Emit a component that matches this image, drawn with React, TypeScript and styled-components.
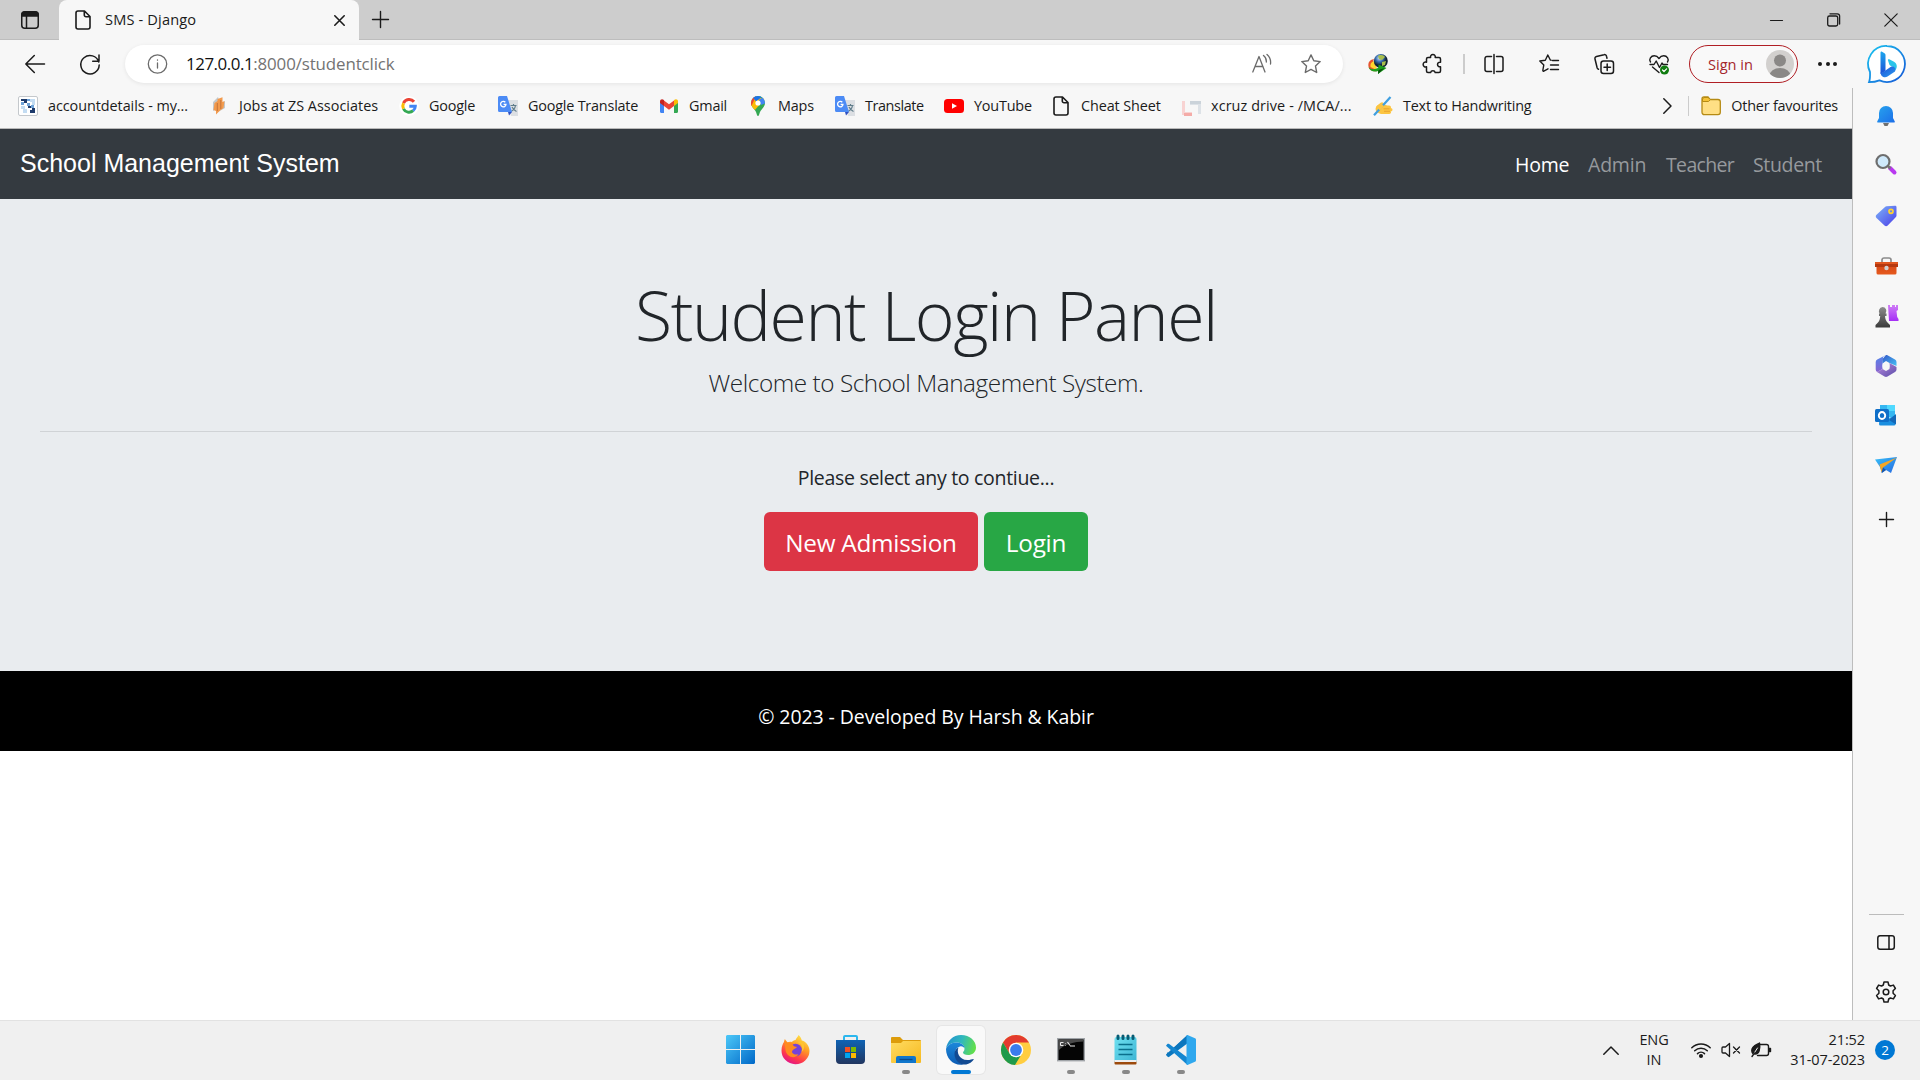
import React from "react";
import styled, { createGlobalStyle, css } from "styled-components";

const ui = `"Open Sans", "Noto Sans", sans-serif`;

const GlobalStyle = createGlobalStyle`
  * { box-sizing: border-box; }
  html, body { margin: 0; padding: 0; background: #fff; }
  body { overflow: hidden; font-family: ${ui}; }
  svg { display: block; flex: none; overflow: visible; }
`;

const Screen = styled.div`
  width: 1920px;
  height: 1080px;
  display: flex;
  flex-direction: column;
  overflow: hidden;
  background: #f7f7f7;
  color: #1b1b1b;
`;

/* ---------- tab strip ---------- */

const TabStrip = styled.header`
  height: 40px;
  flex: none;
  display: flex;
  align-items: stretch;
  background: #cdcdcd;
  box-shadow: inset 0 -1px 0 #bdbdbd;
`;

const TabActions = styled.div`
  width: 59px;
  padding: 11px 0 0 21px;
`;

const Tab = styled.div`
  width: 300px;
  display: flex;
  align-items: center;
  padding: 0 14px 0 16px;
  background: #f7f7f7;
  border-radius: 8px 8px 0 0;
`;

const TabTitle = styled.span`
  flex: 1;
  margin-left: 14px;
  padding-bottom: 2px;
  font-size: 14.6px;
  letter-spacing: 0.15px;
  line-height: 20px;
`;

const NewTab = styled.div`
  padding: 11px 0 0 13px;
  flex: 1;
`;

const WindowControls = styled.div`
  display: flex;
  align-items: center;
  gap: 44px;
  padding-right: 22px;
`;

/* ---------- toolbar ---------- */

const Toolbar = styled.div`
  height: 48px;
  flex: none;
  display: flex;
  align-items: center;
  padding: 0 14px 0 25px;
`;

const NavButtons = styled.div`
  width: 100px;
  display: flex;
  gap: 35px;
  padding-bottom: 1px;
`;

const AddressBar = styled.div`
  width: 1218px;
  height: 38px;
  display: flex;
  align-items: center;
  padding: 0 22px 1px 22px;
  border-radius: 19px;
  background: #fff;
  box-shadow: 0 1px 4px rgba(0, 0, 0, 0.08);
`;

const AddressActions = styled.div`
  display: flex;
  gap: 29px;
`;

const Url = styled.div`
  flex: 1;
  margin-left: 19px;
  padding-bottom: 1px;
  font-size: 16.9px;
  letter-spacing: -0.12px;
  color: #737373;
  b { font-weight: 400; color: #111; letter-spacing: -0.45px; }
`;

const ToolIcons = styled.div`
  display: flex;
  align-items: center;
  width: 346px;
  padding: 0 0 1px 25px;
  gap: 35px;
`;

const ToolDivider = styled.span`
  width: 2px;
  height: 20px;
  background: #ccc;
  margin: 0 -16px 0 -15px;
`;

const SignIn = styled.button`
  width: 109px;
  height: 38px;
  display: flex;
  align-items: center;
  justify-content: space-between;
  padding: 0 3px 1px 18px;
  border: 1.5px solid #b01e24;
  border-radius: 19px;
  background: #f9f9f9;
  color: #a4262c;
  font: 14.6px ${ui};
  letter-spacing: 0;
`;

const Dots = styled.div`
  width: 19px;
  margin: 0 31px 0 20px;
  display: flex;
  justify-content: space-between;
  i { width: 4px; height: 4px; border-radius: 50%; background: #1b1b1b; }
`;

/* ---------- body: page column and sidebar ---------- */

const Body = styled.div`
  height: 932px;
  flex: none;
  display: flex;
`;

const PageColumn = styled.div`
  width: 1853px;
  display: flex;
  flex-direction: column;
  border-right: 1px solid #bdbdbd;
`;

const BookmarkBar = styled.div`
  height: 41px;
  flex: none;
  display: flex;
  align-items: flex-start;
  padding: 8px 14px 0 18px;
  border-bottom: 1px solid #b9b9b9;
`;

const Bookmark = styled.div<{ $width?: number; $track?: number }>`
  width: ${(p) => (p.$width ? `${p.$width}px` : "auto")};
  display: flex;
  align-items: center;
  gap: 10px;
  height: 20px;
  font-size: 14.4px;
  line-height: 20px;
  white-space: nowrap;
  letter-spacing: ${(p) => p.$track ?? -0.2}px;
`;

const Overflow = styled.div`
  margin-left: auto;
  display: flex;
  align-items: center;
  height: 20px;
`;

const BookmarkDivider = styled.span`
  width: 1px;
  height: 20px;
  background: #ccc;
  margin: 0 12px 0 16px;
`;

/* ---------- website ---------- */

const Site = styled.main`
  flex: 1;
  background: #fff;
`;

const NavBar = styled.nav`
  height: 70px;
  display: flex;
  align-items: center;
  justify-content: space-between;
  padding: 0 29px 0 20px;
  background: #343a40;
`;

const Brand = styled.a`
  font: 25px "Liberation Sans", Arial, sans-serif;
  color: #fff;
  padding-bottom: 1px;
`;

const NavLinks = styled.div`
  display: flex;
  gap: 20px;
  padding-top: 2px;
`;

const NavLink = styled.a<{ $active?: boolean; $width: number; $track?: number }>`
  width: ${(p) => p.$width}px;
  font-size: 19.5px;
  letter-spacing: ${(p) => p.$track ?? -0.2}px;
  line-height: 30px;
  white-space: nowrap;
  color: ${(p) => (p.$active ? "#fff" : "#96999d")};
`;

const Jumbotron = styled.section`
  height: 472px;
  display: flex;
  flex-direction: column;
  align-items: center;
  padding: 74px 40px 0;
  background: #e9ecef;
  color: #212529;
`;

const Title = styled.h1`
  margin: 0;
  font-size: 68px;
  font-weight: 300;
  line-height: 84px;
  letter-spacing: -1.5px;
  white-space: nowrap;
`;

const Lead = styled.p`
  margin: 7px 0 0;
  font-size: 24.3px;
  font-weight: 300;
  line-height: 38px;
  letter-spacing: -0.44px;
`;

const Rule = styled.hr`
  width: 100%;
  height: 1px;
  margin: 29px 0 31px;
  border: 0;
  background: #d0d3d6;
`;

const Prompt = styled.p`
  margin: 0 0 19px;
  font-size: 19.5px;
  line-height: 30px;
  letter-spacing: -0.3px;
`;

const Actions = styled.div`
  display: flex;
  gap: 6px;
`;

const ActionButton = styled.button<{ $color: string; $width: number }>`
  width: ${(p) => p.$width}px;
  height: 59px;
  padding: 2px 0 0;
  border: 0;
  border-radius: 6px;
  background: ${(p) => p.$color};
  color: #fff;
  font: 24.3px ${ui};
  letter-spacing: -0.25px;
  white-space: nowrap;
`;

const Footer = styled.footer`
  height: 80px;
  padding-top: 31px;
  background: #000;
  color: #fff;
  text-align: center;
  font-size: 19.5px;
  line-height: 30px;
  letter-spacing: -0.08px;
`;

/* ---------- Edge sidebar ---------- */

const Sidebar = styled.aside`
  flex: 1;
  display: flex;
  flex-direction: column;
  align-items: center;
  padding: 18px 1px 17px 0;
`;

const SideSlot = styled.div<{ $height?: number }>`
  height: ${(p) => p.$height ?? 50}px;
  width: 24px;
  display: flex;
  justify-content: center;
`;

const SideRule = styled.div`
  width: 35px;
  height: 1px;
  margin: auto 0 20px;
  background: #bcbcbc;
`;

/* ---------- taskbar ---------- */

const Taskbar = styled.footer`
  height: 60px;
  flex: none;
  display: grid;
  grid-template-columns: 1fr 495px 1fr;
  background: #f0f0f0;
  box-shadow: inset 0 1px 0 #e2e2e2;
`;

const Apps = styled.div`
  grid-column: 2;
  display: flex;
  justify-content: space-between;
  padding-top: 6px;
`;

const indicator = css<{ $active?: boolean }>`
  &::after {
    content: "";
    width: ${(p) => (p.$active ? 20 : 8)}px;
    height: 4px;
    border-radius: 2px;
    margin-top: auto;
    background: ${(p) => (p.$active ? "#0078d4" : "#888")};
  }
`;

const AppTile = styled.div<{ $active?: boolean; $open?: boolean }>`
  width: 48px;
  height: 48px;
  margin: 0 3px 0 4px;
  display: flex;
  flex-direction: column;
  align-items: center;
  padding-top: 9px;
  border-radius: 5px;
  background: ${(p) => (p.$active ? "#f9f9f9" : "transparent")};
  box-shadow: ${(p) => (p.$active ? "0 0 0 1px #e6e6e6" : "none")};
  ${(p) => p.$open && indicator}
`;

const Tray = styled.div`
  grid-column: 3;
  display: flex;
  align-items: center;
  justify-content: flex-end;
  padding-right: 25px;
`;

const TrayText = styled.div<{ $align: "center" | "right"; $width: number }>`
  width: ${(p) => p.$width}px;
  text-align: ${(p) => p.$align};
  font-size: 14.5px;
  line-height: 20px;
  letter-spacing: -0.1px;
  white-space: nowrap;
`;

const TrayIcons = styled.div`
  display: flex;
  align-items: center;
  gap: 10px;
  margin: 0 18px 0 2px;
`;

const Badge = styled.span`
  width: 20px;
  height: 20px;
  margin-left: 10px;
  border-radius: 50%;
  background: #0078d4;
  color: #fff;
  text-align: center;
  font-size: 13.5px;
  line-height: 20px;
`;

/* ---------- drawings ---------- */

type IconProps = { w?: number; h?: number; box?: string; stroke?: string; sw?: number; children: React.ReactNode };

const Line = ({ w = 20, h = 20, box, stroke = "#1b1b1b", sw = 1.4, children }: IconProps) => (
  <svg width={w} height={h} viewBox={box ?? `0 0 ${w} ${h}`} fill="none" stroke={stroke} strokeWidth={sw} strokeLinecap="round" strokeLinejoin="round">
    {children}
  </svg>
);

const Art = ({ w = 20, h = 20, box, children }: IconProps) => (
  <svg width={w} height={h} viewBox={box ?? `0 0 ${w} ${h}`}>{children}</svg>
);

const Grad = ({ id, from, to, v }: { id: string; from: string; to: string; v?: boolean }) => (
  <linearGradient id={id} x1="0" y1="0" x2={v ? "0" : "1"} y2="1">
    <stop offset="0" stopColor={from} />
    <stop offset="1" stopColor={to} />
  </linearGradient>
);

const PageIcon = ({ w = 16 }: { w?: number }) => (
  <Line w={w} h={20} box="0 0 16 20" sw={1.6}>
    <path d="M3 1h6.5L15 6.500V17a2 2 0 0 1-2 2H3a2 2 0 0 1-2-2V3a2 2 0 0 1 2-2zM9.300 1v4a1.700 1.700 0 0 0 1.700 1.700h4" />
  </Line>
);

const AccountIcon = () => (
  <Art>
    <rect x="0.500" y="0.500" width="19" height="19" rx="1.500" fill="#fff" stroke="#c4c8cc" />
    <path d="M3 3h3v2H3zM6 3h3v4H6zM14 12h3v5h-3zM12 14h2v3h-2zM10 10h3v2h-3z" fill="#1d3a6b" />
    <path d="M9 3h3v2H9zM3 6h3v3H3zM9 7h3v3H9zM13 9h3v3h-3z" fill="#6fa3d8" />
    <path d="M12 3h5v3h-5zM3 10h4v3H3zM5 13h4v4H5zM14 6h3v3h-3z" fill="#c3dcf2" />
  </Art>
);

const ZsIcon = () => (
  <Art>
    <path d="M4 6l5-5 1 3v8l-6 3zM9 16l7-4V5l-6 4z" fill="#c2c8cd" />
    <path d="M8.500 3l5-1.800V6l2-1-1 7-3.500 2.500-4 4V15l-2.500-1 1-7L8.500 5z" fill="#f29a4d" />
    <path d="M8.300 7v8M11.800 4v9" stroke="#c4733a" strokeWidth="1" />
  </Art>
);

const GoogleIcon = () => (
  <Art>
    <circle cx="10" cy="10" r="9.800" fill="#fff" />
    <g fill="none" strokeWidth="3">
      <path d="M15 5.800A6.200 6.200 0 0 0 4.500 7.200" stroke="#ea4335" />
      <path d="M4.500 7.200a6.200 6.200 0 0 0 0 5.600" stroke="#fbbc05" />
      <path d="M4.500 12.800a6.200 6.200 0 0 0 9.600 1.900" stroke="#34a853" />
      <path d="M10.300 10.200h6a6 6 0 0 1-2.200 4.500" stroke="#4285f4" />
    </g>
  </Art>
);

const TranslateIcon = () => (
  <Art>
    <path d="M8 4h12v16h-7z" fill="#dcdfe3" />
    <path d="M12.500 9.500h6M15.500 8v1.500M17.500 9.500c-.5 3-2.500 5-4.500 6M14 11c1 2 2.500 3.500 4.500 4.500" stroke="#607d8b" strokeWidth="1.200" fill="none" />
    <path d="M1.500 0H9l5 16H1.500A1.500 1.500 0 0 1 0 14.500v-13A1.500 1.500 0 0 1 1.500 0z" fill="#4c8bf5" />
    <path d="M10 16h4l-3 3.500z" fill="#2f50c0" />
    <path d="M7.300 6.300A2.700 2.700 0 1 0 8 8.300H5.600" fill="none" stroke="#fff" strokeWidth="1.300" />
  </Art>
);

const GmailIcon = () => (
  <Art>
    <path d="M1 5.500v10.300c0 .6.500 1.200 1.200 1.200H5V9z" fill="#4285f4" />
    <path d="M19 5.500v10.300c0 .6-.5 1.200-1.200 1.200H15V9z" fill="#34a853" />
    <path d="M5 4.500V10l5 3.800 5-3.800V4.500L10 8.300z" fill="#ea4335" />
    <path d="M1 5.300C1 3.300 3.200 2.500 4.500 3.700L5 4.200V10L1 7z" fill="#c5221f" />
    <path d="M19 5.300c0-2-2.200-2.800-3.500-1.600l-.5.5V10l4-3z" fill="#fbbc04" />
  </Art>
);

const MapsIcon = () => (
  <Art>
    <clipPath id="pin"><path d="M10 0a7 7 0 0 1 7 7c0 4-3.500 5.500-5 9-.8 2-1 4-2 4s-1.200-2-2-4c-1.500-3.500-5-5-5-9a7 7 0 0 1 7-7z" /></clipPath>
    <g clipPath="url(#pin)">
      <path d="M0 0h20v20H0z" fill="#34a853" />
      <path d="M17 3L5 16 0 9l8-8z" fill="#fbbc04" />
      <path d="M0 0h8l-5 11L0 9z" fill="#ea4335" />
      <path d="M5 1.500l3 4L15 0H5z" fill="#1a73e8" />
      <path d="M11 4l4-3 3 6-5 2z" fill="#4285f4" />
    </g>
    <circle cx="10" cy="7" r="2.600" fill="#fff" />
  </Art>
);

const YouTubeIcon = () => (
  <Art><rect y="3" width="20" height="14" rx="3.500" fill="#f00" /><path d="M8 7.200v5.600l5-2.800z" fill="#fff" /></Art>
);

const XcruzIcon = () => (
  <Art>
    <path d="M1 5v14h10v-3H4V5z" fill="#f8d3d2" /><path d="M3 17h8v3H3z" fill="#f4aba7" />
    <path d="M9 5h11v13h-3V9H9z" fill="#dde2e7" /><path d="M9 5h11v3H9z" fill="#cbd3da" />
  </Art>
);

const HandwritingIcon = () => (
  <Art>
    <g fill="#fcc542">
      <ellipse cx="9" cy="13" rx="6.500" ry="5" />
      <rect x="7" y="9.500" width="11" height="3.600" rx="1.800" />
      <rect x="8" y="12" width="11.500" height="3.600" rx="1.800" />
      <rect x="7" y="14.500" width="11" height="3.500" rx="1.700" />
      <rect x="2.500" y="8" width="9" height="4" rx="2" transform="rotate(-40 7 10)" />
    </g>
    <path d="M10.500 12.800h6M11 15.300h6" stroke="#e59a2a" strokeWidth=".8" />
    <path d="M17.500 1L3.500 16.500 1 19.300" stroke="#3f9fe0" strokeWidth="2.200" fill="none" />
    <path d="M6 13.500l4-4.300" stroke="#fcc542" strokeWidth="3" />
  </Art>
);

const IdmIcon = () => (
  <Art>
    <defs><radialGradient id="globe" cx=".4" cy=".3"><stop offset="0" stopColor="#d5e6f7" /><stop offset=".5" stopColor="#3d74b8" /><stop offset="1" stopColor="#123" /></radialGradient></defs>
    <path d="M6 5C1 6 0 9 .5 12.500 1 16 5 18 9 17l-1-4C5 13 4 9 6 5z" fill="#e8542f" />
    <path d="M6 7C3 8 2 10 2.500 13l6 3V13z" fill="#ffd52e" />
    <circle cx="12.800" cy="7" r="7" fill="url(#globe)" />
    <path d="M10 2c2-2 6-1 7 1l-3 3-3-1zM14 8l4-1-1 4-3 1z" fill="#a9bf4c" />
    <path d="M.5 13c3 3 7 2.500 10 .5V10.500l8 3.500-8.500 6v-3C6 18.500 2 17 .5 13z" fill="#1ea01e" />
    <path d="M10.500 16l6-2-6.500 6z" fill="#07520b" />
  </Art>
);

const PuzzleIcon = () => (
  <Line w={20} h={20} sw={1.500}>
    <path d="M5 3.500h2.600a2.400 2.400 0 1 1 4.600 0h3.800a1.500 1.500 0 0 1 1.500 1.500v3.300a2.300 2.300 0 1 0 0 4.400V17a1.500 1.500 0 0 1-1.500 1.500h-3.800a2.400 2.400 0 0 0-4.600 0H5A1.500 1.500 0 0 1 3.500 17v-4.300a2.400 2.400 0 1 1 0-4.400V5A1.500 1.500 0 0 1 5 3.500z" />
  </Line>
);

const SplitIcon = () => (
  <Line sw={1.500}><path d="M7.500 2.500H3A2 2 0 0 0 1 4.500v11a2 2 0 0 0 2 2h4.500M12.500 2.500H17a2 2 0 0 1 2 2v11a2 2 0 0 1-2 2h-4.500M10 .5v19" /></Line>
);

const FavouritesIcon = () => (
  <Line sw={1.400}>
    <path d="M12 6.200L11.300 6 8.800 1 6.300 6.200.8 7l4 3.900-1 5.600.5.800 4.700-2.500M13.500 6.500h6M11.500 11h8M11.500 15.500h8" />
  </Line>
);

const CollectionsIcon = () => (
  <Line sw={1.500}>
    <rect x="7" y="7" width="12.500" height="12.500" rx="2.500" />
    <path d="M13.200 10v6.500M10 13.200h6.500M4.500 15.300a2 2 0 0 1-1.300-1.300L1 5a2 2 0 0 1 1.500-2.500L10 .7a2 2 0 0 1 2.500 1.500l.5 2" />
  </Line>
);

const HeartIcon = () => (
  <Line sw={1.400}>
    <path d="M1.500 8C-.5 5 2 1.800 5.300 1.800c2 0 3.500 1 4.700 2.700 1.200-1.700 2.700-2.700 4.700-2.700C18 1.800 20.500 5 18.500 8M3.500 13l6.500 5.500M1 10.500h4l2.200-3.500 3.300 6.500 2.500-4.500 1 1.500h4.500" />
    <circle cx="15.500" cy="16" r="4.500" fill="#107c10" stroke="none" />
    <path d="M13.500 16l1.500 1.500 2.600-2.700" stroke="#fff" strokeWidth="1.200" />
  </Line>
);

const BingIcon = () => (
  <Art w={38} h={38}>
    <defs><Grad id="bingRing" from="#19c5f0" to="#1656d6" /><Grad id="bingB" from="#1ca7ee" to="#1c4fd6" v /><Grad id="bingFoot" from="#1c4fd6" to="#2b9df0" /></defs>
    <path d="M19 1a18 18 0 1 1-7.500 34.400C8.500 36.600 4.500 37.200 1 37.200 2.200 34 2.200 31 2 27A18 18 0 0 1 19 1z" fill="#fff" stroke="url(#bingRing)" strokeWidth="1.800" />
    <path d="M12.500 7.500c0-1 .8-1.200 1.500-.8l2.500 1.500c.6.400 1 1 1 1.700V26l-5 3z" fill="url(#bingB)" />
    <path d="M20 15.500c-.4-1 .3-1.600 1.300-1.200l4.700 2.400c3 1.600 3.500 5 2 7.500l-1 1.300c0-2-1.500-3.500-4-4.500-1.500-.7-1.800-1.500-2-2.500z" fill="#2bc4ea" />
    <path d="M12.500 27c0 1 2 .5 3.500-.5l6.500-4.500c3.500-1.500 6 1.500 4.500 4.500l-7.500 5c-3 2-7 0-7-4.500z" fill="url(#bingFoot)" />
  </Art>
);

const BellIcon = () => (
  <Art w={18} h={20}>
    <defs><Grad id="bell" from="#27a4ee" to="#1c6ee8" /></defs>
    <path d="M6 17h6l-1.500 3h-3z" fill="#707070" />
    <path d="M9 0a7 7 0 0 1 7 7v5l1.800 3.500c.2.700-.2 1-.8 1H1c-.6 0-1-.3-.8-1L2 12V7a7 7 0 0 1 7-7z" fill="url(#bell)" />
  </Art>
);

const SearchIcon = () => (
  <Art>
    <path d="M14 14l4.500 4.500" stroke="#b939f0" strokeWidth="4" strokeLinecap="round" />
    <path d="M12 12l2.500 2.500" stroke="#777" strokeWidth="2.500" />
    <circle cx="7" cy="7.500" r="6.500" fill="#cfe9fb" stroke="#6e6e6e" strokeWidth="2.200" />
  </Art>
);

const TagIcon = () => (
  <Art w={22} h={22}>
    <defs><Grad id="tag" from="#7db4f8" to="#4a3de8" /></defs>
    <path d="M11.500 1.200L20 .8c1 0 1.500.5 1.500 1.500v8.200c0 .8-.3 1.300-.8 1.800l-8 8.200c-1 1-2.200 1-3.200 0l-8-7.500c-1-1-1-2.200 0-3.200l8.500-7.800c.4-.5.900-.8 1.500-.8z" fill="url(#tag)" />
    <circle cx="16" cy="6.300" r="2" fill="#6d86e8" stroke="#ffd22e" strokeWidth="1.700" />
  </Art>
);

const ToolboxIcon = () => (
  <Art w={23} h={18}>
    <defs><Grad id="toolbox" from="#d94a17" to="#e65a1e" v /></defs>
    <path d="M7 5V3a2 2 0 0 1 2-2h5a2 2 0 0 1 2 2v2" fill="none" stroke="#8c8c8c" strokeWidth="1.700" />
    <path d="M1.500 9h20v7a1.500 1.500 0 0 1-1.500 1.500H3A1.500 1.500 0 0 1 1.500 16z" fill="url(#toolbox)" />
    <path d="M1 5h21a1 1 0 0 1 1 1v4H0V6a1 1 0 0 1 1-1z" fill="#b5380f" />
    <path d="M0 5h23v2H0z" fill="#e0561e" />
    <circle cx="11.500" cy="11" r="2.200" fill="#d0d0d0" />
  </Art>
);

const ChessIcon = () => (
  <Art w={23} h={24}>
    <defs><Grad id="pawn" from="#8d8d8d" to="#3a3a3a" v /><Grad id="rook" from="#cf7df6" to="#a52ef5" v /></defs>
    <path d="M13 1h2v2h2V1h3v2h1V1h2v5l-1.500 1 .7 6 1.300 2v2h-9.500z" fill="url(#rook)" />
    <path d="M7.500 3a4 4 0 0 1 3 6.500h1V12H10c.2 3 1 5 2.500 6.500L15 21v2.500H.5V21L3 18.500C4.500 17 5 15 5.200 12H4V9.500h.8A4 4 0 0 1 7.500 3z" fill="url(#pawn)" />
  </Art>
);

const M365Icon = () => (
  <Art w={22} h={22}>
    <defs><Grad id="ma" from="#3558c8" to="#45c0f5" /><Grad id="mb" from="#4f86ec" to="#8a63d0" v /><Grad id="mc" from="#b98ae0" to="#5b4da8" /></defs>
    <path d="M11 0L2.200 4.600A3 3 0 0 0 .7 7v7.500a3 3 0 0 0 1.500 2.500l5.300-3V8.500L8 2z" fill="url(#mb)" />
    <path d="M7.500 8.500V4L11 0h1l8 4.500A3 3 0 0 1 21.500 7v4L14.500 8l-3.500-2z" fill="url(#ma)" />
    <path d="M14.500 8l7 4v2.500a3 3 0 0 1-1.500 2.500l-7.500 4.500a3 3 0 0 1-3 0L2 17l5.500-3 3.500 2 3.500-2z" fill="url(#mc)" />
    <circle cx="11" cy="11" r="3.600" fill="#f7f7f7" />
  </Art>
);

const OutlookIcon = () => (
  <Art w={22} h={21}>
    <path d="M5 0h13.500A1.500 1.500 0 0 1 20 1.500v11H5z" fill="#35b7f1" />
    <path d="M12 0h8v6h-8z" fill="#50d9ff" />
    <path d="M5 10l8 4 7.500-4V19a1.500 1.500 0 0 1-1.500 1.500H5.500A1.500 1.500 0 0 1 4 19z" fill="#1a8fe0" />
    <path d="M14 15l7-6v10.500z" fill="#1468b8" />
    <rect y="4" width="14" height="13" rx="1.500" fill="#0f6fc8" />
    <ellipse cx="7" cy="10.500" rx="3.200" ry="3.500" fill="none" stroke="#fff" strokeWidth="1.900" />
  </Art>
);

const PlaneIcon = () => (
  <Art w={23} h={17}>
    <defs><Grad id="plane" from="#38c0f8" to="#2668e0" /></defs>
    <path d="M0 2.500L22 0l-6 16-5-3-4 3-2-6z" fill="url(#plane)" />
    <path d="M4.500 7.500L22 .5 8 10.500l-1.500 5z" fill="#f5a623" />
    <path d="M8 10.500l3 2.500-4.500 3z" fill="#1c55a8" />
  </Art>
);

const GearIcon = () => (
  <Line w={22} h={22} sw={1.500}>
    <path d="M9 1h4l.7 3 1.700 1 3-.9 2 3.400-2.300 2.200v2.600l2.300 2.200-2 3.400-3-.9-1.700 1L13 21H9l-.7-3-1.700-1-3 .9-2-3.400 2.300-2.200V9.700L1.600 7.500l2-3.400 3 .9 1.700-1z" />
    <circle cx="11" cy="11" r="2.800" />
  </Line>
);

const StartIcon = () => (
  <Art w={29} h={29}>
    <defs><linearGradient id="win" gradientUnits="userSpaceOnUse" x1="0" y1="0" x2="29" y2="29"><stop offset="0" stopColor="#4cc8f8" /><stop offset="1" stopColor="#0068c8" /></linearGradient></defs>
    <path d="M1 0h13v14H0V1zM15 0h13l1 1v13H15zM0 15h14v14H1l-1-1zM15 15h14v13l-1 1H15z" fill="url(#win)" />
  </Art>
);

const FirefoxIcon = () => (
  <Art w={29} h={29}>
    <defs><linearGradient id="ff" x1=".8" y1="0" x2=".3" y2="1"><stop offset="0" stopColor="#fff04f" /><stop offset=".4" stopColor="#ff9a24" /><stop offset=".75" stopColor="#ff3a4a" /><stop offset="1" stopColor="#e0128c" /></linearGradient></defs>
    <path d="M17.500 0c2 1.500 3 4 3.300 5.500C24 6 28.500 10 28.500 16A14 13.500 0 0 1 .5 15.500C.5 11 2 8.500 3 7l.8-3 2.500 3.200C8 6.500 10 6.500 11 7c.5-1 2-2 3.500-2C15.500 3 17 1.500 17.500 0z" fill="url(#ff)" />
    <circle cx="14.500" cy="15" r="6.300" fill="#7542d8" />
    <path d="M3.500 5.500l4 3 4-.5c0 3.500 3 3.500 4.500 4-1 2-3.500 1.500-4.500 3.500-2 3 3 5 6 3.500-3 5.500-12 3.500-13-4z" fill="#ff8a1f" />
    <path d="M17 8c4 0 5 5 3.500 9 4-3 3.500-9-1-11.500z" fill="#ffc430" />
  </Art>
);

const StoreIcon = () => (
  <Art w={29} h={29}>
    <defs><Grad id="store" from="#0f63b4" to="#22365f" v /></defs>
    <path d="M8 6V2a1 1 0 0 1 1-1h11a1 1 0 0 1 1 1v4" fill="none" stroke="#2bb7ee" strokeWidth="2" />
    <path d="M0 5h29v20a4 4 0 0 1-4 4H4a4 4 0 0 1-4-4z" fill="url(#store)" />
    <path d="M9 12h5v5H9z" fill="#f25022" /><path d="M15 12h5v5h-5z" fill="#7fba00" />
    <path d="M9 18h5v5H9z" fill="#00a4ef" /><path d="M15 18h5v5h-5z" fill="#ffb900" />
  </Art>
);

const ExplorerIcon = () => (
  <Art w={30} h={29}>
    <defs><Grad id="exp" from="#ffdc62" to="#f6b91f" /></defs>
    <path d="M0 3a1 1 0 0 1 1-1h8l3 3h17a1 1 0 0 1 1 1v4H0z" fill="#dd9c0b" />
    <path d="M0 8h10l2-2h18v21a1 1 0 0 1-1 1H1a1 1 0 0 1-1-1z" fill="url(#exp)" />
    <path d="M5 28v-5a2 2 0 0 1 2-2h16a2 2 0 0 1 2 2v5z" fill="#1076cc" />
    <path d="M8.500 24.500h13" stroke="#0a4a8c" strokeWidth="1.300" />
  </Art>
);

const EdgeIcon = () => (
  <Art w={30} h={30}>
    <defs>
      <linearGradient id="e1" x1="0" y1=".3" x2="1" y2=".5"><stop offset="0" stopColor="#2292cf" /><stop offset=".5" stopColor="#30b8bd" /><stop offset="1" stopColor="#63e048" /></linearGradient>
      <Grad id="e2" from="#1c88da" to="#0d5cb4" v />
    </defs>
    <path d="M0 14C1 6 7 0 15 0c9 0 15 6 15 12.500 0 5-4 7.500-8 7.500-3 0-5-1-5-2.500 0-1 1.500-1.500 1.500-3.800C18.500 10 15 7.500 10.500 7.500 5 7.500 1 10.500 0 14z" fill="url(#e1)" />
    <path d="M0 14c1-3.500 5-6.500 10.500-6.500 4.500 0 8 2.500 8 6-1-2-3-2.500-4.500-2-4 1-5 4.500-5 7 0 5 4 9.500 8 11C8 31 0 24 0 14z" fill="url(#e2)" />
    <path d="M12.500 12.500c-2 4 0 12.500 9 12.500 3 0 5.500-1.500 6-1s0 1-1 2c-3 3-7 4-10 3.500C11 28 8.500 23 8.500 19c0-3 1.500-5.500 4-6.500z" fill="#124a92" />
  </Art>
);

const ChromeIcon = () => (
  <Art w={30} h={30}>
    <circle cx="15" cy="15" r="15" fill="#ffcd40" />
    <path d="M2 7.500A15 15 0 0 1 28 7.500H15L8.500 18.500z" fill="#e33b2e" />
    <path d="M2 7.500A15 15 0 0 0 14 30l7-11.500-12.500 0z" fill="#1f9a4b" />
    <circle cx="15" cy="15" r="7.300" fill="#fff" /><circle cx="15" cy="15" r="5.900" fill="#3a7cec" />
  </Art>
);

const PromptIcon = () => (
  <Art w={28} h={29}>
    <rect x=".7" y="3.700" width="26.600" height="22" fill="#050505" stroke="#a0a4a8" strokeWidth="1.400" />
    <path d="M1.500 4.500h25v2c-8 0-20 3-25 9z" fill="#4a4a4a" />
    <path d="M3.500 7.500h3M3.500 10.500h3M3.500 7.500v3M8.500 8v.5M8.500 10v.5M10.500 7l2.500 3.500M13 11h5" stroke="#e8e8e8" strokeWidth="1.100" />
  </Art>
);

const NotepadIcon = () => (
  <Art w={23} h={30}>
    <defs><Grad id="note" from="#6fe0f0" to="#3db5d4" /></defs>
    <path d="M.5 26h22v2.500a1 1 0 0 1-1 1h-20a1 1 0 0 1-1-1z" fill="#9c4a0c" />
    <path d="M.5 4a2 2 0 0 1 2-2h18a2 2 0 0 1 2 2v22.500H.5z" fill="url(#note)" />
    <path d="M.5 25h22v2H.5z" fill="#eee" />
    <path d="M4.500 9.500h14M4.500 14.500h14M4.500 19.500h14" stroke="#0a6f8c" strokeWidth="1.700" />
    <path d="M4 1v2.500M9 1v2.500M14 1v2.500M19 1v2.500" stroke="#075c74" strokeWidth="3" strokeLinecap="round" />
  </Art>
);

const CodeIcon = () => (
  <Art w={30} h={30}>
    <path d="M21.500 0L3.200 17.300a1.300 1.300 0 0 1-1.800 0L.4 20.500l2.200 1.700L22 8z" fill="#0b7fcb" />
    <path d="M21.500 0L0 19.500l1.300 1.700c.6.500 1.200.5 1.900 0L22 7z" fill="#0c76bd" />
    <path d="M21.500 30L0 10.800l1.300-1.700c.6-.5 1.200-.5 1.900 0L22 23z" fill="#1486d0" />
    <path d="M21.500 0L29 3.200a1.500 1.500 0 0 1 1 1.500v20.600a1.500 1.500 0 0 1-1 1.500L21.500 30c-.6 0-1-.5-1-1V1c0-.5.400-1 1-1z" fill="#2fa8ee" />
  </Art>
);

const WifiIcon = () => (
  <Line w={20} h={16} sw={1.500}>
    <path d="M.8 5.800a13 13 0 0 1 18.400 0M3.700 8.800a9 9 0 0 1 12.600 0M6.500 11.600a5 5 0 0 1 7 0" />
    <circle cx="10" cy="14" r="1.300" fill="#1b1b1b" />
  </Line>
);

const MutedIcon = () => (
  <Line w={20} h={16} sw={1.300}>
    <path d="M8.500 1.500v13L4.500 11H2A1 1 0 0 1 1 10V6a1 1 0 0 1 1-1h2.500zM12.500 5l6 6M18.500 5l-6 6" />
  </Line>
);

const BatteryIcon = () => (
  <Line w={20} h={16} sw={1.400}>
    <path d="M9 2.500h6.500a2 2 0 0 1 2 2v7a2 2 0 0 1-2 2H6.500M18.500 6.500h1v3h-1z" />
    <path d="M8.500 1C5 3 .8 4 .8 8.500c0 2.500 2 3.500 3.500 3.500C8 12 9.500 7 8.500 1z" fill="#1b1b1b" />
    <path d="M6.500 6L1 14.500" stroke="#f0f0f0" strokeWidth="1" /><path d="M3.500 11L1 14.500" />
  </Line>
);

/* ---------- data ---------- */

const bookmarks = [
  { text: "accountdetails - my...", width: 191, track: -0.06, icon: <AccountIcon /> },
  { text: "Jobs at ZS Associates", width: 190, track: 0.02, icon: <ZsIcon /> },
  { text: "Google", width: 99, icon: <GoogleIcon /> },
  { text: "Google Translate", width: 161, icon: <TranslateIcon /> },
  { text: "Gmail", width: 89, icon: <GmailIcon /> },
  { text: "Maps", width: 87, icon: <MapsIcon /> },
  { text: "Translate", width: 109, track: -0.4, icon: <TranslateIcon /> },
  { text: "YouTube", width: 107, icon: <YouTubeIcon /> },
  { text: "Cheat Sheet", width: 130, track: -0.1, icon: <PageIcon w={20} /> },
  { text: "xcruz drive - /MCA/...", width: 192, track: 0.1, icon: <XcruzIcon /> },
  { text: "Text to Handwriting", width: 170, icon: <HandwritingIcon /> },
];

const sideApps = [
  { icon: <BellIcon />, height: 48 },
  { icon: <SearchIcon />, height: 51 },
  { icon: <TagIcon />, height: 52 },
  { icon: <ToolboxIcon />, height: 47 },
  { icon: <ChessIcon />, height: 51 },
  { icon: <M365Icon />, height: 50 },
  { icon: <OutlookIcon />, height: 52 },
  { icon: <PlaneIcon />, height: 55 },
];

const apps = [
  { icon: <StartIcon /> },
  { icon: <FirefoxIcon /> },
  { icon: <StoreIcon /> },
  { icon: <ExplorerIcon />, open: true },
  { icon: <EdgeIcon />, open: true, active: true },
  { icon: <ChromeIcon /> },
  { icon: <PromptIcon />, open: true },
  { icon: <NotepadIcon />, open: true },
  { icon: <CodeIcon />, open: true },
];

const links = [
  { text: "Home", width: 53, active: true },
  { text: "Admin", width: 58 },
  { text: "Teacher", width: 67, track: -0.65 },
  { text: "Student", width: 70, track: -0.35 },
];

export default function App() {
  return (
    <Screen>
      <GlobalStyle />
      <TabStrip>
        <TabActions>
          <Line w={18} h={18} sw={1.500}>
            <rect x=".75" y=".75" width="16.500" height="16.500" rx="3" />
            <path d="M5.500 5v12" />
            <path d="M1 5V3.500A2.500 2.500 0 0 1 3.500 1h11A2.500 2.500 0 0 1 17 3.500V5z" fill="#1b1b1b" />
          </Line>
        </TabActions>
        <Tab>
          <PageIcon />
          <TabTitle>SMS - Django</TabTitle>
          <Line w={11} h={11} sw={1.600}><path d="M.8.8l9.400 9.400M10.200.8L.8 10.200" /></Line>
        </Tab>
        <NewTab><Line w={17} h={17}><path d="M8.500.5v16M.5 8.500h16" /></Line></NewTab>
        <WindowControls>
          <Line w={13} h={14} sw={1.200}><path d="M.5 7.500h12" /></Line>
          <Line w={13} h={14} sw={1.300}><rect x=".7" y="3" width="10" height="10" rx="1.800" /><path d="M3 .8h7.300a2.300 2.300 0 0 1 2.300 2.300V11" /></Line>
          <Line w={14} h={14} sw={1.200}><path d="M.8.8l12.400 12.400M13.200.8L.8 13.200" /></Line>
        </WindowControls>
      </TabStrip>

      <Toolbar>
        <NavButtons>
          <Line sw={1.500}><path d="M19.500 10H.8M9.300 1.500L.8 10l8.500 8.500" /></Line>
          <Line sw={1.500}><path d="M18.800 8a9.200 9.200 0 1 0 .4 3M19 1v6.300h-6.300" /></Line>
        </NavButtons>
        <AddressBar>
          <Line stroke="#6b6b6b" sw={1.300}><circle cx="10.500" cy="10" r="9.200" /><path d="M10.500 9v5M10.500 6v.2" /></Line>
          <Url><b>127.0.0.1</b>:8000/studentclick</Url>
          <AddressActions>
            <Line stroke="#6b6b6b" sw={1.300}><path d="M.8 18L7 2.500 13 18M3 12.500h8M11.500 1.500c2 1.500 3 4 2.800 6.500M15 .5c2.800 2.500 4 6 3.500 9.500" /></Line>
            <Line stroke="#6b6b6b" sw={1.400}><path d="M10 .9l2.800 5.900 6.400.8-4.700 4.500 1.200 6.400L10 15.400l-5.700 3.100 1.200-6.400L.8 7.600l6.400-.8z" /></Line>
          </AddressActions>
        </AddressBar>
        <ToolIcons>
          <IdmIcon />
          <PuzzleIcon />
          <ToolDivider />
          <SplitIcon />
          <FavouritesIcon />
          <CollectionsIcon />
          <HeartIcon />
        </ToolIcons>
        <SignIn>
          Sign in
          <Art w={28} h={28}>
            <clipPath id="face"><circle cx="14" cy="14" r="14" /></clipPath>
            <g clipPath="url(#face)">
              <path d="M0 0h28v28H0z" fill="#d2d0ce" />
              <circle cx="14" cy="10.500" r="6" fill="#8a8886" />
              <ellipse cx="14" cy="26" rx="10.500" ry="8" fill="#8a8886" />
            </g>
          </Art>
        </SignIn>
        <Dots><i /><i /><i /></Dots>
        <BingIcon />
      </Toolbar>

      <Body>
        <PageColumn>
          <BookmarkBar>
            {bookmarks.map((b) => (
              <Bookmark key={b.text} $width={b.width} $track={b.track}>{b.icon}<span>{b.text}</span></Bookmark>
            ))}
            <Overflow>
              <Line w={9} h={16} sw={1.500}><path d="M.8.8L8 8 .8 15.200" /></Line>
              <BookmarkDivider />
              <Bookmark>
                <Art>
                  <path d="M1 5V3a2 2 0 0 1 2-2h4l2 2.500h8a2.300 2.300 0 0 1 2.300 2.300v10.500a2.300 2.300 0 0 1-2.300 2.300H3.300A2.300 2.300 0 0 1 1 16.300z" fill="#ffdf84" stroke="#b58a14" strokeWidth="1.300" />
                  <path d="M1.500 5.500h6L9.500 3.500 7 1.500H3L1.500 3z" fill="#f5c237" stroke="#b58a14" />
                </Art>
                <span>Other favourites</span>
              </Bookmark>
            </Overflow>
          </BookmarkBar>
          <Site>
            <NavBar>
              <Brand>School Management System</Brand>
              <NavLinks>
                {links.map((l) => (
                  <NavLink key={l.text} $active={l.active} $width={l.width} $track={l.track}>{l.text}</NavLink>
                ))}
              </NavLinks>
            </NavBar>
            <Jumbotron>
              <Title>Student Login Panel</Title>
              <Lead>Welcome to School Management System.</Lead>
              <Rule />
              <Prompt>Please select any to contiue...</Prompt>
              <Actions>
                <ActionButton $color="#dc3545" $width={214}>New Admission</ActionButton>
                <ActionButton $color="#28a745" $width={104}>Login</ActionButton>
              </Actions>
            </Jumbotron>
            <Footer>© 2023 - Developed By Harsh &amp; Kabir</Footer>
          </Site>
        </PageColumn>
        <Sidebar>
          {sideApps.map((s, i) => (
            <SideSlot key={i} $height={s.height}>{s.icon}</SideSlot>
          ))}
          <Line w={15} h={15}><path d="M7.500.5v14M.5 7.500h14" /></Line>
          <SideRule />
          <SideSlot $height={46}>
            <Line w={18} h={15} sw={1.500}><path d="M3 .8h12a2.300 2.300 0 0 1 2.300 2.200v9a2.300 2.300 0 0 1-2.300 2.200H3A2.300 2.300 0 0 1 .8 12V3A2.300 2.300 0 0 1 3 .8zM12 1v13" /></Line>
          </SideSlot>
          <GearIcon />
        </Sidebar>
      </Body>

      <Taskbar>
        <Apps>
          {apps.map((a, i) => (
            <AppTile key={i} $open={a.open} $active={a.active}>{a.icon}</AppTile>
          ))}
        </Apps>
        <Tray>
          <Line w={16} h={9} sw={1.500}><path d="M.8 8.200L8 1l7.200 7.200" /></Line>
          <TrayText $align="center" $width={70}>ENG<br />IN</TrayText>
          <TrayIcons><WifiIcon /><MutedIcon /><BatteryIcon /></TrayIcons>
          <TrayText $align="right" $width={76}>21:52<br />31-07-2023</TrayText>
          <Badge>2</Badge>
        </Tray>
      </Taskbar>
    </Screen>
  );
}
